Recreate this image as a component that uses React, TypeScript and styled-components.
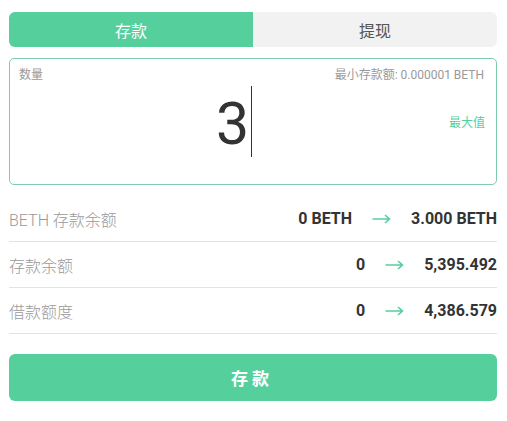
import React from 'react';
import styled, { createGlobalStyle } from 'styled-components';

const GREEN = '#55d09d';

const GlobalStyle = createGlobalStyle`
  body {
    margin: 0;
    background: #ffffff;
    font-family: Roboto, "Noto Sans CJK SC", sans-serif;
  }
`;

const Page = styled.div`
  display: flex;
  flex-direction: column;
  margin: 12px 10px 0 9px;
`;

const Tabs = styled.div`
  display: grid;
  grid-template-columns: 1fr 1fr;
  height: 35px;
  border-radius: 6px;
  overflow: hidden;
  background: #f2f2f2;
`;

const Tab = styled.div<{ $active?: boolean }>`
  display: flex;
  align-items: center;
  justify-content: center;
  font-size: 16px;
  color: ${(p) => (p.$active ? '#ffffff' : '#555555')};
  background: ${(p) => (p.$active ? GREEN : 'transparent')};
`;

const InputBox = styled.div`
  margin-top: 11px;
  height: 127px;
  box-sizing: border-box;
  border: 1px solid #7fcbb0;
  border-radius: 5px;
  padding: 8px 12px 0 9px;
  display: flex;
  flex-direction: column;
`;

const BoxHeader = styled.div`
  display: flex;
  justify-content: space-between;
  font-size: 12px;
  line-height: 16px;
  color: #999999;
`;

const AmountRow = styled.div`
  display: flex;
  align-items: center;
  margin-top: 3px;
  height: 71px;
`;

const AmountField = styled.div`
  flex: 1;
  display: flex;
  justify-content: center;
  align-items: center;
`;

const AmountText = styled.span`
  font-size: 59px;
  font-weight: 400;
  line-height: 71px;
  color: #333333;
  padding-top: 3px;
`;

const Caret = styled.span`
  width: 1px;
  height: 71px;
  background: #333333;
  margin-left: 2px;
`;

const MaxButton = styled.span`
  font-size: 12px;
  color: ${GREEN};
  cursor: pointer;
  margin-right: -1px;
`;

const Rows = styled.div`
  margin-top: 11px;
  display: flex;
  flex-direction: column;
`;

const Row = styled.div`
  display: flex;
  align-items: center;
  justify-content: space-between;
  height: 45px;
  border-bottom: 1px solid #e3e3e3;
`;

const Label = styled.span`
  font-size: 16px;
  font-weight: 300;
  color: #999999;
`;

const Change = styled.div`
  display: flex;
  align-items: center;
  gap: 20px;
  font-size: 16px;
  font-weight: 700;
  color: #333333;
`;

const Arrow = () => (
  <svg width="19" height="10" viewBox="0 0 19 10" fill="none">
    <path d="M0.5 5H17.5M13 1L17.5 5L13 9" stroke={GREEN} strokeWidth="1.6" />
  </svg>
);

const SubmitButton = styled.button`
  margin-top: 20px;
  height: 47px;
  border: none;
  border-radius: 6px;
  background: ${GREEN};
  color: #ffffff;
  font-family: Roboto, "Noto Sans CJK SC", sans-serif;
  font-size: 17px;
  font-weight: 700;
  letter-spacing: 4px;
  padding-left: 4px;
`;

const rows = [
  { label: 'BETH 存款余额', from: '0 BETH', to: '3.000 BETH' },
  { label: '存款余额', from: '0', to: '5,395.492' },
  { label: '借款额度', from: '0', to: '4,386.579' },
];

export default function App() {
  return (
    <>
      <GlobalStyle />
      <Page>
        <Tabs>
          <Tab $active>存款</Tab>
          <Tab>提现</Tab>
        </Tabs>
        <InputBox>
          <BoxHeader>
            <span>数量</span>
            <span>最小存款额: 0.000001 BETH</span>
          </BoxHeader>
          <AmountRow>
            <AmountField>
              <AmountText>3</AmountText>
              <Caret />
            </AmountField>
            <MaxButton>最大值</MaxButton>
          </AmountRow>
        </InputBox>
        <Rows>
          {rows.map((r) => (
            <Row key={r.label}>
              <Label>{r.label}</Label>
              <Change>
                <span>{r.from}</span>
                <Arrow />
                <span>{r.to}</span>
              </Change>
            </Row>
          ))}
        </Rows>
        <SubmitButton>存款</SubmitButton>
      </Page>
    </>
  );
}
